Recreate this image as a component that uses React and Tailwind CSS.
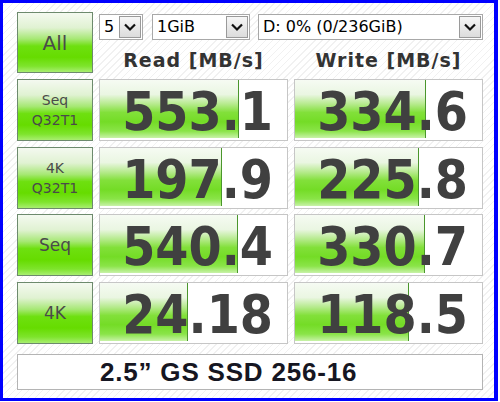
const rows = [
  { label: ['Seq', 'Q32T1'], size: 'text-[14px]', read: '553.1', rw: 140, write: '334.6', ww: 132 },
  { label: ['4K', 'Q32T1'], size: 'text-[14px]', read: '197.9', rw: 123, write: '225.8', ww: 125 },
  { label: ['Seq'], size: 'text-[17px]', read: '540.4', rw: 139, write: '330.7', ww: 131 },
  { label: ['4K'], size: 'text-[17px]', read: '24.18', rw: 89, write: '118.5', ww: 115 },
];

const btnBg =
  'bg-[linear-gradient(to_bottom,#f4f9f0_0%,#e0f2d2_25%,#a6e874_44%,#6ee010_56%,#66dc00_75%,#7ee42c_90%,#a8ee70_100%)]';
const barBg =
  'bg-[linear-gradient(to_bottom,#f6fbf3_0%,#eaf6e2_25%,#b4ea8a_42%,#82e03a_56%,#74dc26_72%,#8ae448_88%,#c8f2a8_100%)]';

function Chevron() {
  return (
    <svg width="14" height="10" viewBox="0 0 14 10">
      <path d="M2 2.5 L7 7.5 L12 2.5" fill="none" stroke="#111" strokeWidth="2.2" />
    </svg>
  );
}

function Select({ text, className }) {
  return (
    <div className={`flex items-center justify-between h-[26px] border border-[#a8a8a8] bg-white pl-[4px] pr-[1px] ${className}`}>
      <span className="text-[16px] text-black font-['DejaVu_Sans',sans-serif] leading-none">{text}</span>
      <div className="flex items-center justify-center w-[22px] h-[22px] border border-[#9a9a9a] bg-[linear-gradient(to_bottom,#f6f6f6,#dcdcdc)]">
        <Chevron />
      </div>
    </div>
  );
}

function Label({ lines, size }) {
  return (
    <div className={`flex flex-col items-center justify-center border border-[#6d8a6d] ${btnBg} text-[#4a4a4a] ${size} leading-[20px] font-['DejaVu_Sans',sans-serif]`}>
      {lines.map((l) => (
        <span key={l}>{l}</span>
      ))}
    </div>
  );
}

function Cell({ value, width }) {
  return (
    <div className="relative border border-[#c6c6c6] bg-white overflow-hidden">
      <div
        className={`absolute left-0 top-0 bottom-[2px] border-r border-[#4a962c] ${barBg}`}
        style={{ width: width - 1 }}
      />
      <div className="relative h-full flex items-center justify-end pr-[14px] pt-[3px] text-[53px] font-bold text-[#404040] font-['DejaVu_Sans_Condensed','DejaVu_Sans',sans-serif] font-stretch-condensed leading-none">
        {value}
      </div>
    </div>
  );
}

export default function App() {
  return (
    <div className="w-[500px] h-[402px] bg-white">
      <div className="w-[498px] h-[401px] border-t-[3px] border-l-[3px] border-b-[3px] border-r-4 border-[#0000ff] bg-[repeating-linear-gradient(-45deg,#ffffff_0px,#ffffff_4px,#f1f1f1_4px,#f1f1f1_5px)] pl-[14px] pt-[9px]">
        <div className="grid grid-cols-[76px_189px_189px] gap-x-[6px]">
          <div className={`h-[61px] flex items-center justify-center border border-[#6d8a6d] ${btnBg} text-[#4a4a4a] text-[20px] font-['DejaVu_Sans',sans-serif]`}>
            All
          </div>
          <div className="col-span-2 flex flex-col">
            <div className="flex mt-[2px] gap-[9px]">
              <Select text="5" className="w-[44px]" />
              <Select text="1GiB" className="w-[98px]" />
              <Select text="D: 0% (0/236GiB)" className="w-[225px] ml-[-1px]" />
            </div>
            <div className="grid grid-cols-2 gap-x-[6px] mt-[8px]">
              <div className="text-center text-[19px] font-bold tracking-[1px] text-[#333] font-['DejaVu_Sans',sans-serif] leading-[24px]">
                Read [MB/s]
              </div>
              <div className="text-center text-[19px] font-bold tracking-[1px] text-[#333] font-['DejaVu_Sans',sans-serif] leading-[24px]">
                Write [MB/s]
              </div>
            </div>
          </div>
        </div>
        <div className="grid grid-cols-[76px_189px_189px] gap-x-[6px] gap-y-[5.5px] auto-rows-[62px] mt-[6px]">
          {rows.map((r) => (
            <div key={r.read} className="contents">
              <Label lines={r.label} size={r.size} />
              <Cell value={r.read} width={r.rw} />
              <Cell value={r.write} width={r.ww} />
            </div>
          ))}
        </div>
        <div className="mt-[10.5px] w-[466px] h-[36px] flex items-center border border-[#b4b4b4] bg-white pl-[82px] text-[26px] font-bold tracking-[0.8px] text-[#161622] font-['Liberation_Sans',Arial,sans-serif] leading-none">
          2.5” GS SSD 256-16
        </div>
      </div>
    </div>
  );
}
